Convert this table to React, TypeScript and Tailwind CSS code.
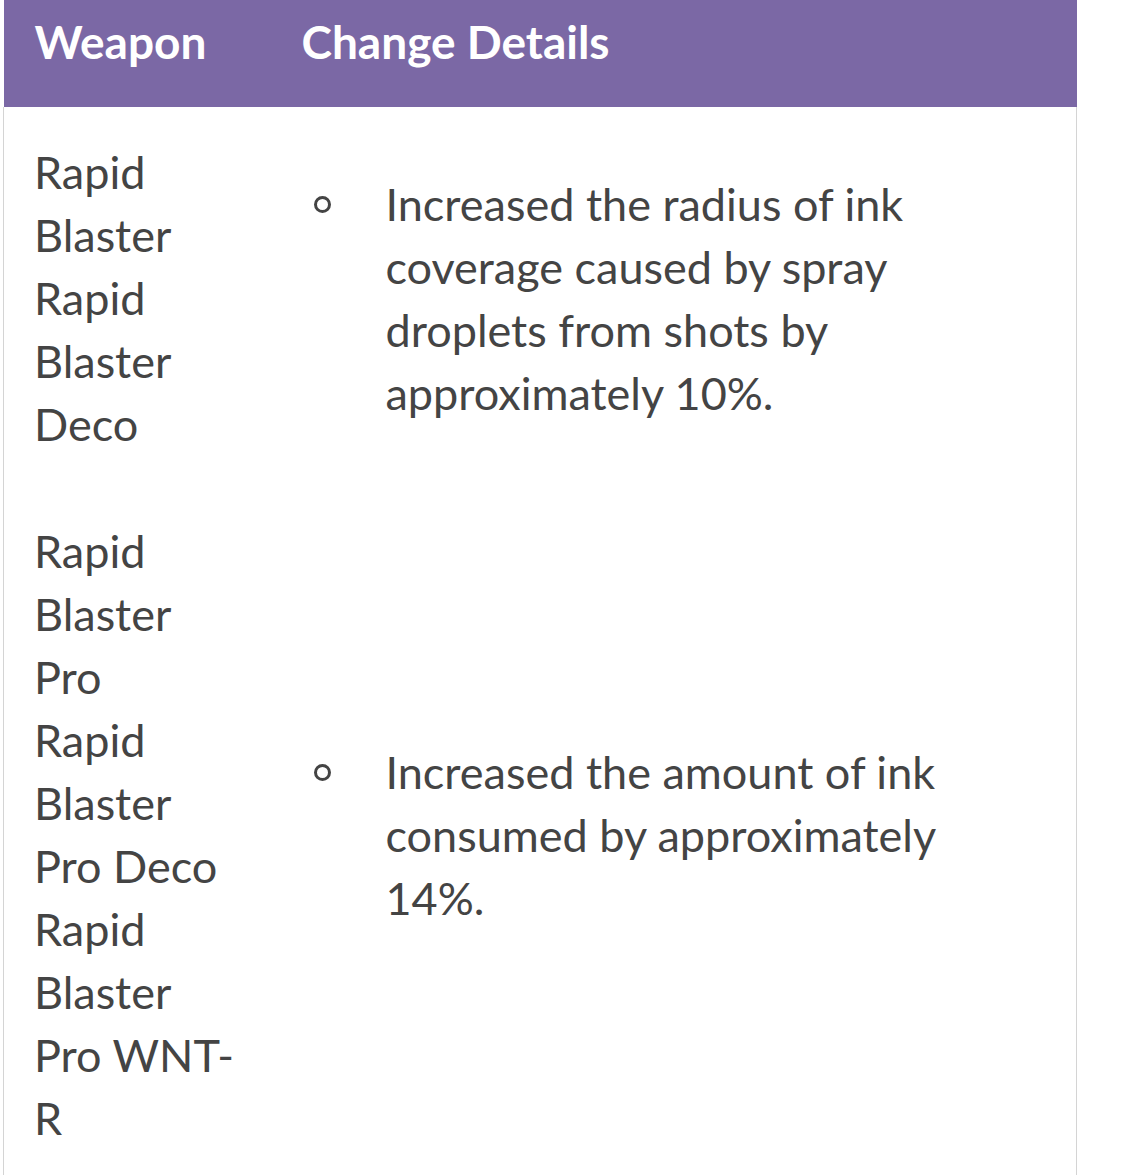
export default function App() {
  const rows = [
    {
      weapons: ['Rapid Blaster', 'Rapid Blaster Deco'],
      change: 'Increased the radius of ink coverage caused by spray droplets from shots by approximately 10%.',
    },
    {
      weapons: ['Rapid Blaster Pro', 'Rapid Blaster Pro Deco', 'Rapid Blaster Pro WNT-R'],
      change: 'Increased the amount of ink consumed by approximately 14%.',
    },
  ];

  return (
    <div className="min-h-screen bg-white pl-[3px] font-['Lato',sans-serif]">
      <table className="w-[1074px] table-fixed border-collapse">
        <colgroup>
          <col className="w-[268px]" />
          <col />
        </colgroup>
        <thead>
          <tr className="bg-[#7b68a5] text-white text-[46px] leading-[63px]">
            <th className="pl-[31px] pr-[32px] pt-[10px] pb-[34px] text-left align-top font-bold">Weapon</th>
            <th className="pl-[30px] pr-[32px] pt-[10px] pb-[34px] text-left align-top font-bold">Change Details</th>
          </tr>
        </thead>
        <tbody className="text-[45px] leading-[63px] text-[#444]">
          {rows.map((row, i) => (
            <tr key={i}>
              <td
                className={
                  i === 0
                    ? 'border-l border-[#d4d4d4] pl-[30px] pr-[32px] pt-[34px] pb-[32px] align-middle'
                    : 'border-l border-[#d4d4d4] pl-[30px] pr-[32px] py-[32px] align-middle'
                }
              >
                {row.weapons.map((w) => (
                  <div key={w}>{w}</div>
                ))}
              </td>
              <td
                className={
                  i === 0
                    ? 'border-r border-[#d4d4d4] pl-[32px] pr-[60px] pt-[34px] pb-[32px] align-middle'
                    : 'border-r border-[#d4d4d4] pl-[32px] pr-[60px] py-[32px] align-middle'
                }
              >
                <ul>
                  <li className="flex">
                    <span className="flex h-[63px] w-[82px] shrink-0 items-center pl-[10px]">
                      <span className="block h-[17px] w-[17px] rounded-full border-[3px] border-[#444]" />
                    </span>
                    <span>{row.change}</span>
                  </li>
                </ul>
              </td>
            </tr>
          ))}
        </tbody>
      </table>
    </div>
  );
}
